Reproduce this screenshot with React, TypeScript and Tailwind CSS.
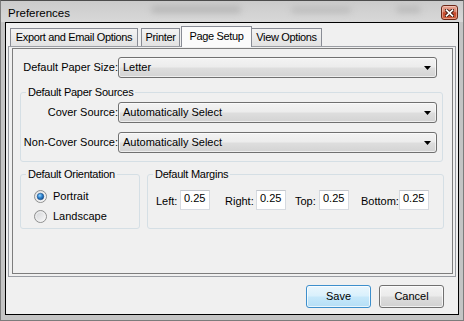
import React from "react";

function CloseButton() {
  return (
    <div className="mt-[4px] w-[17px] h-[15px] rounded-[3px] border border-[#6b2717] bg-[linear-gradient(to_bottom,#e9a897_0%,#d8826b_45%,#c4472a_52%,#d0603e_100%)] shadow-[inset_0_0_0_1px_rgba(255,230,220,0.45)] flex items-center justify-center">
      <svg width="9" height="8" viewBox="0 0 9 8">
        <path d="M1.5 1.2 L7.5 6.8 M7.5 1.2 L1.5 6.8" stroke="#3b1309" strokeWidth="3.4" strokeLinecap="square" />
        <path d="M1.5 1.2 L7.5 6.8 M7.5 1.2 L1.5 6.8" stroke="#ffffff" strokeWidth="1.7" strokeLinecap="square" />
      </svg>
    </div>
  );
}

function Combo({ value }: { value: string }) {
  return (
    <div className="w-[319px] h-[21px] shrink-0 flex items-center justify-between rounded-[3px] border border-[#707070] bg-[linear-gradient(to_bottom,#f3f3f3_0%,#ececec_48%,#dedede_52%,#d3d3d3_100%)] shadow-[inset_0_0_0_1px_rgba(255,255,255,0.6)] pl-[4px] pr-[5px] whitespace-nowrap">
      <span>{value}</span>
      <svg width="7" height="4" viewBox="0 0 7 4">
        <path d="M0 0 H7 L3.5 4 Z" fill="#000" />
      </svg>
    </div>
  );
}

function Radio({ checked, label }: { checked: boolean; label: string }) {
  return (
    <div className="h-[20px] flex items-center gap-[6px]">
      <svg width="13" height="13" viewBox="0 0 13 13">
        <defs>
          <linearGradient id="rbg" x1="0" y1="0" x2="1" y2="1">
            <stop offset="0" stopColor="#cfd1d4" />
            <stop offset="1" stopColor="#fbfbfb" />
          </linearGradient>
          <radialGradient id="rdot" cx="0.4" cy="0.35" r="0.75">
            <stop offset="0" stopColor="#9ad6ff" />
            <stop offset="0.45" stopColor="#2d84d0" />
            <stop offset="1" stopColor="#0c3f7d" />
          </radialGradient>
        </defs>
        <circle cx="6.5" cy="6.5" r="6" fill="url(#rbg)" stroke="#8e8f8f" strokeWidth="1" />
        <circle cx="6.5" cy="6.5" r="4.6" fill="none" stroke="#f4f4f4" strokeWidth="0.8" />
        {checked && <circle cx="6.5" cy="6.5" r="3.3" fill="url(#rdot)" stroke="#1b4a80" strokeWidth="0.5" />}
      </svg>
      <span>{label}</span>
    </div>
  );
}

function MarginInput({ value }: { value: string }) {
  return (
    <div className="w-[30px] h-[20px] shrink-0 bg-white border border-[#d6dae0] border-t-[#c2c6cc] pl-[3px] pt-[1px] leading-[13px]">
      {value}
    </div>
  );
}

export default function App() {
  return (
    <div className="w-[464px] h-[321px] flex flex-col bg-[#c4c4c4] border border-[#7c7c7c] border-t-[#4c4c4c] font-['Liberation_Sans',Arial,sans-serif] text-[11px] leading-[13px] text-black overflow-hidden">
      {/* title bar */}
      <div className="relative h-[21px] shrink-0 flex items-start justify-between pl-[7px] pr-[5px] bg-[linear-gradient(to_bottom,#cbcbcb,#d8d8d8)]">
        <div className="absolute left-[150px] top-[5px] w-[90px] h-[7px] rounded-full bg-[#a6a6a6] blur-[3px] opacity-60" />
        <div className="absolute left-[290px] top-[6px] w-[60px] h-[6px] rounded-full bg-[#a6a6a6] blur-[3px] opacity-50" />
        <div className="absolute left-[395px] top-[5px] w-[25px] h-[7px] rounded-full bg-[#a6a6a6] blur-[3px] opacity-50" />
        <span className="relative pt-[5px] text-[11.5px] leading-[14px]">Preferences</span>
        <div className="relative">
          <CloseButton />
        </div>
      </div>

      {/* client */}
      <div className="mx-[4px] h-[293px] shrink-0 border border-black bg-[#f0f0f0] flex flex-col pt-[3px]">
        {/* tabs */}
        <div className="h-[20px] flex items-end pl-[4px] tracking-[-0.35px] whitespace-nowrap">
          <div className="w-[128px] h-[18px] flex items-center justify-center border border-b-0 border-[#898c95] bg-[linear-gradient(to_bottom,#f3f3f3,#e2e2e2)]">
            Export and Email Options
          </div>
          <div className="ml-[3px] w-[39px] h-[18px] flex items-center justify-center border border-b-0 border-[#898c95] bg-[linear-gradient(to_bottom,#f3f3f3,#e2e2e2)]">
            Printer
          </div>
          <div className="relative z-10 ml-[1px] -mb-px w-[71px] h-[21px] flex items-center justify-center border border-b-0 border-[#898c95] bg-[#fbfbfb] pb-[1px]">
            Page Setup
          </div>
          <div className="w-[70px] h-[18px] flex items-center justify-center border border-b-0 border-l-0 border-[#898c95] bg-[linear-gradient(to_bottom,#f3f3f3,#e2e2e2)]">
            View Options
          </div>
        </div>

        {/* panel */}
        <div className="mx-[2px] h-[231px] shrink-0 border border-[#9a9da3] pt-[1px] pl-[3px] pr-[2px] pb-[2px] flex">
          <div className="flex-1 border border-[#7d7d7d] flex flex-col pl-[7px] pt-[8px]">
            {/* paper size row */}
            <div className="h-[21px] flex items-center">
              <span className="w-[98px] text-right whitespace-nowrap">Default Paper Size:</span>
              <Combo value="Letter" />
            </div>

            {/* paper sources */}
            <fieldset className="mt-[8px] w-[423px] border border-[#d5dfe5] rounded-[3px] pt-[3px] pb-[8px] flex flex-col gap-[9px]">
              <legend className="ml-[5px] px-[2px] leading-[13px] tracking-[-0.25px]">Default Paper Sources</legend>
              <div className="h-[21px] flex items-center">
                <span className="w-[97px] text-right whitespace-nowrap">Cover Source:</span>
                <Combo value="Automatically Select" />
              </div>
              <div className="h-[21px] flex items-center">
                <span className="w-[97px] text-right whitespace-nowrap">Non-Cover Source:</span>
                <Combo value="Automatically Select" />
              </div>
            </fieldset>

            {/* bottom groups */}
            <div className="mt-[6px] flex gap-[7px]">
              <fieldset className="w-[120px] h-[61px] border border-[#d5dfe5] rounded-[3px]">
                <legend className="ml-[5px] px-[2px] leading-[13px] tracking-[-0.25px]">Default Orientation</legend>
                <div className="pt-[5px] pl-[13px]">
                  <Radio checked label="Portrait" />
                  <Radio checked={false} label="Landscape" />
                </div>
              </fieldset>
              <fieldset className="w-[297px] h-[61px] border border-[#d5dfe5] rounded-[3px]">
                <legend className="ml-[5px] px-[2px] leading-[13px] tracking-[-0.25px]">Default Margins</legend>
                <div className="pt-[9px] pl-[8px] flex items-start whitespace-nowrap">
                  <span className="w-[24px] mt-[5px]">Left:</span>
                  <MarginInput value="0.25" />
                  <span className="ml-[15px] w-[31px] mt-[5px]">Right:</span>
                  <MarginInput value="0.25" />
                  <span className="ml-[9px] w-[24px] mt-[5px]">Top:</span>
                  <MarginInput value="0.25" />
                  <span className="ml-[12px] w-[38px] mt-[5px]">Bottom:</span>
                  <MarginInput value="0.25" />
                </div>
              </fieldset>
            </div>
          </div>
        </div>

        {/* buttons */}
        <div className="mt-[8px] h-[23px] flex justify-end gap-[8px] pr-[14px]">
          <button className="w-[65px] h-[23px] rounded-[3px] border border-[#3d8fcc] bg-[linear-gradient(to_bottom,#eaf6fd_0%,#d9f0fc_48%,#c6e8fa_52%,#b5def5_100%)] shadow-[inset_0_0_0_1px_rgba(255,255,255,0.7)] flex items-center justify-center text-[11px] leading-[13px]">
            Save
          </button>
          <button className="w-[65px] h-[23px] rounded-[3px] border border-[#707070] bg-[linear-gradient(to_bottom,#f3f3f3_0%,#ebebeb_48%,#dddddd_52%,#d1d1d1_100%)] shadow-[inset_0_0_0_1px_rgba(255,255,255,0.7)] flex items-center justify-center text-[11px] leading-[13px]">
            Cancel
          </button>
        </div>
      </div>
    </div>
  );
}
